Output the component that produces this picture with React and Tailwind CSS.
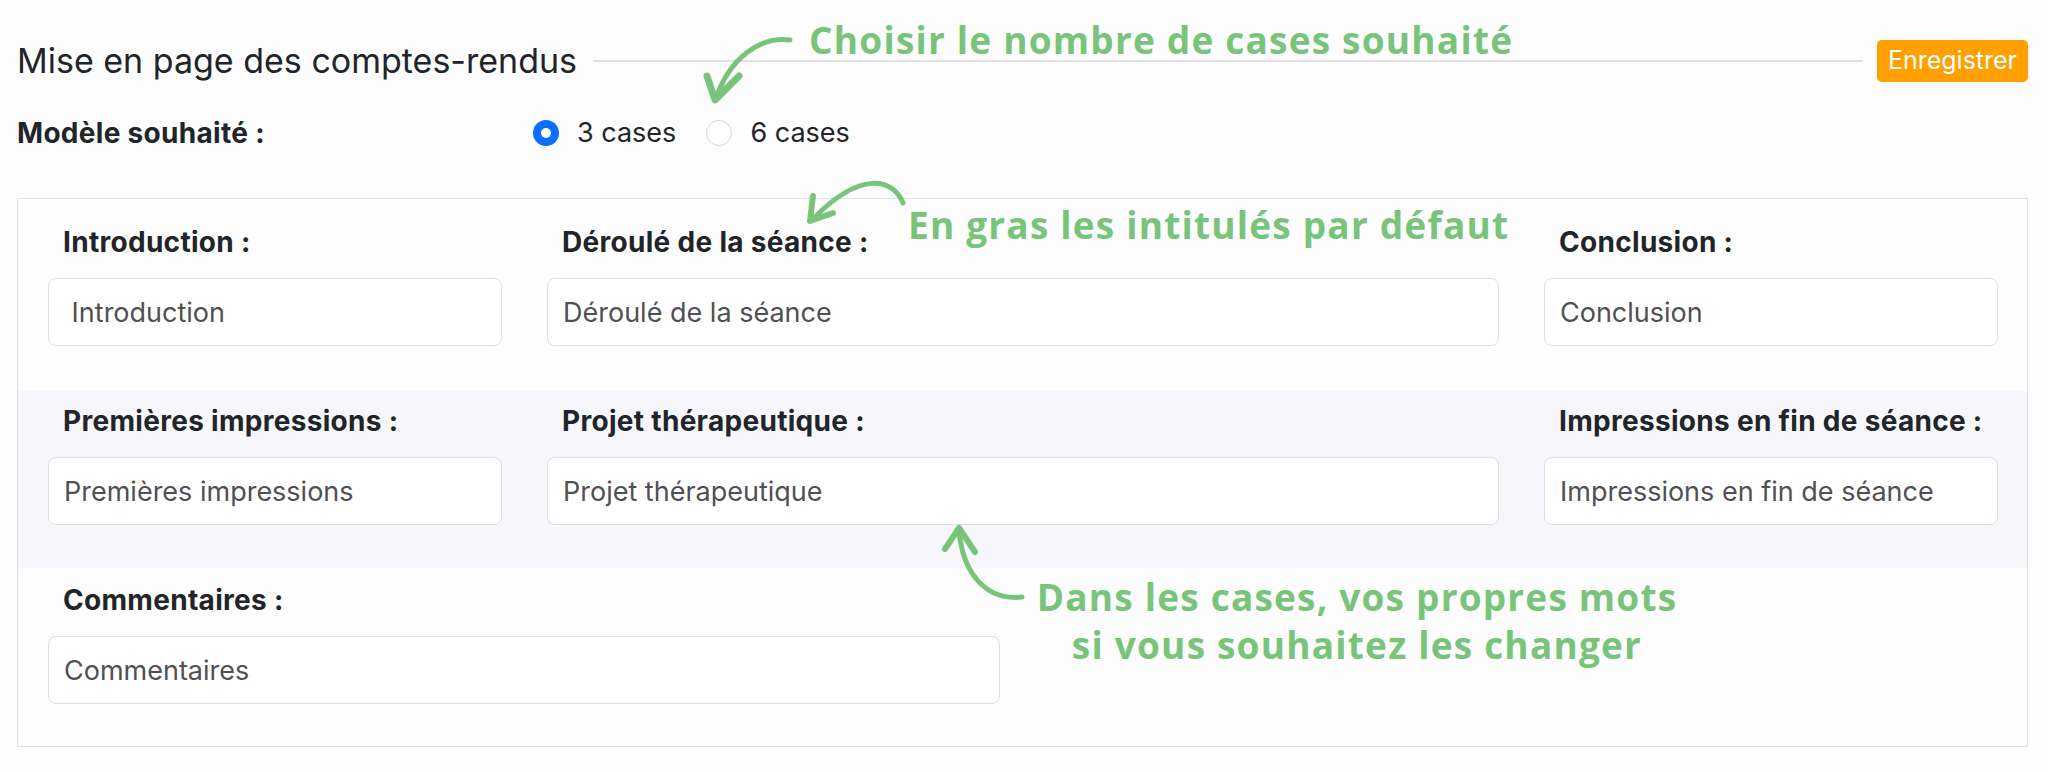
import React from 'react'

const ui = { fontFamily: 'Inter, "Liberation Sans", sans-serif' }
const note = { fontFamily: '"Open Sans", "Noto Sans", sans-serif' }

const rows = [
  {
    bg: 'bg-[#fdfdfe]',
    pad: 'pt-[28px] pb-[45px]',
    fields: [
      { label: 'Introduction :', value: ' Introduction' },
      { label: 'Déroulé de la séance :', value: 'Déroulé de la séance' },
      { label: 'Conclusion :', value: 'Conclusion' },
    ],
  },
  {
    bg: 'bg-[#f7f7fb]',
    pad: 'pt-[15px] pb-[43px]',
    fields: [
      { label: 'Premières impressions :', value: 'Premières impressions' },
      { label: 'Projet thérapeutique :', value: 'Projet thérapeutique' },
      { label: 'Impressions en fin de séance :', value: 'Impressions en fin de séance' },
    ],
  },
]

function Field({ label, value }) {
  return (
    <div className="flex flex-col">
      <label className="pl-[15px] h-[30px] flex items-center text-[28px] font-bold tracking-[0.3px] text-[#212529] whitespace-nowrap">{label}</label>
      <input
        readOnly
        defaultValue={value}
        className="mt-[21px] h-[68px] w-full rounded-[8px] border border-[#dcdde0] bg-white px-[15px] text-[27px] text-[#505054] outline-none"
        style={ui}
      />
    </div>
  )
}

function Radio({ checked, label }) {
  return (
    <label className="flex items-center gap-[18px]">
      {checked ? (
        <span className="w-[26px] h-[26px] rounded-full bg-[#0d6efd] flex items-center justify-center">
          <span className="w-[10px] h-[10px] rounded-full bg-white" />
        </span>
      ) : (
        <span className="w-[26px] h-[26px] rounded-full border border-[#d5d6da] bg-white" />
      )}
      <span className="text-[27px] text-[#212529]">{label}</span>
    </label>
  )
}

export default function App() {
  return (
    <div className="relative w-[2048px] h-[772px] bg-[#fdfdfe] overflow-hidden" style={ui}>
      <div className="pl-[17px] pr-[20px] pt-[39px]">
        {/* Header */}
        <div className="flex items-center h-[43px]">
          <h1 className="text-[34px] leading-none text-[#212529]">Mise en page des comptes-rendus</h1>
          <div className="flex-1 h-[2px] bg-[#e2e2e6] ml-[16px] mr-[14px]" />
          <button className="h-[42px] px-[11px] rounded-[5px] bg-[#ffa000] text-[25px] text-white">Enregistrer</button>
        </div>

        {/* Model choice */}
        <div className="flex items-center h-[30px] mt-[36px]">
          <span className="w-[516px] text-[28px] font-bold tracking-[0.3px] text-[#212529]">Modèle souhaité :</span>
          <div className="flex items-center gap-[30px]">
            <Radio checked label="3 cases" />
            <Radio label="6 cases" />
          </div>
        </div>

        {/* Layout box */}
        <div className="mt-[50px] h-[549px] border border-[#dee0e4]">
          {rows.map((row, i) => (
            <div key={i} className={`${row.bg} ${row.pad} pl-[30px] pr-[29px]`}>
              <div className="grid grid-cols-[454px_952px_454px] gap-x-[45px]">
                {row.fields.map(f => (
                  <Field key={f.label} {...f} />
                ))}
              </div>
            </div>
          ))}
          <div className="pt-[17px] pl-[30px]">
            <div className="w-[952px]">
              <Field label="Commentaires :" value="Commentaires" />
            </div>
          </div>
        </div>
      </div>

      {/* Annotations */}
      <div className="absolute left-[809px] top-[16px] text-[37px] font-bold tracking-[1.2px] leading-[48px] text-[#78c47a] whitespace-nowrap" style={note}>
        Choisir le nombre de cases souhaité
      </div>
      <div className="absolute left-[908px] top-[201px] text-[37px] font-bold tracking-[1.2px] leading-[48px] text-[#78c47a] whitespace-nowrap" style={note}>
        En gras les intitulés par défaut
      </div>
      <div className="absolute left-[997px] top-[573px] w-[720px] text-center text-[37px] font-bold tracking-[1.2px] leading-[48px] text-[#78c47a] whitespace-nowrap" style={note}>
        Dans les cases, vos propres mots
        <br />
        si vous souhaitez les changer
      </div>

      <svg className="absolute inset-0 pointer-events-none" width="2048" height="772" viewBox="0 0 2048 772" fill="none">
        <g stroke="#78c47a" strokeLinecap="round" strokeLinejoin="round">
          <path d="M790 40 C760 36 730 58 716 98" strokeWidth="5" />
          <path d="M707 76 L715 100 L739 76" strokeWidth="7" />
          <path d="M903 203 C893 178 860 170 812 220" strokeWidth="5" />
          <path d="M813 196 L810 221 L833 213" strokeWidth="6" />
          <path d="M1022 597 C985 601 962 572 959 529" strokeWidth="5" />
          <path d="M945 549 L959 528 L975 552" strokeWidth="6" />
        </g>
      </svg>
    </div>
  )
}
